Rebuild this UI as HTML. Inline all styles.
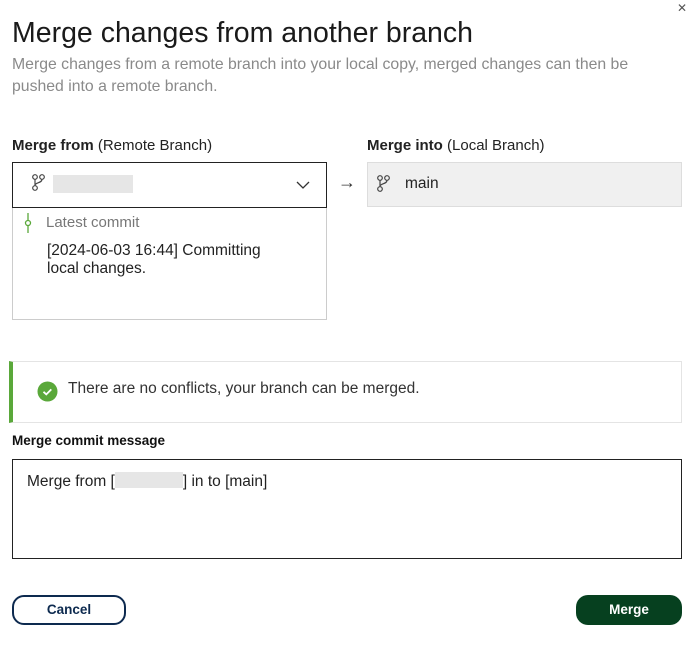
<!DOCTYPE html>
<html><head><meta charset="utf-8"><style>
*{box-sizing:border-box;margin:0;padding:0}
body{width:696px;height:650px;background:#fff;font-family:"Liberation Sans",sans-serif;color:#222;position:relative;overflow:hidden}
.a{position:absolute}
h1{position:absolute;left:12px;top:17px;font-size:28.5px;font-weight:400;color:#1a1a1a}
.sub{left:12px;top:54px;width:690px;font-size:15.8px;color:#8a8a8a;line-height:22px;white-space:nowrap}
.lbl{font-size:15px;color:#222}
.lbl b{font-weight:700}
.box{border:1px solid #ccc}
</style></head><body>
<div class="a" style="left:677px;top:1px;font-size:12px;color:#555">✕</div>
<h1>Merge changes from another branch</h1>
<div class="a sub">Merge changes from a remote branch into your local copy, merged changes can then be<br>pushed into a remote branch.</div>

<div class="a lbl" style="left:12px;top:137px"><b>Merge from</b> (Remote Branch)</div>
<div class="a lbl" style="left:367px;top:137px"><b>Merge into</b> (Local Branch)</div>

<div class="a box" style="left:12px;top:207px;width:315px;height:113px;border-top:none"></div>
<div class="a" style="left:12px;top:162px;width:315px;height:46px;border:1px solid #222;background:#fff"></div>
<svg class="a" style="left:31px;top:173px" width="16" height="20" viewBox="0 0 16 20" fill="none" stroke="#444" stroke-width="1.2"><circle cx="4" cy="4" r="2.3"/><circle cx="11" cy="4" r="2.3"/><circle cx="4" cy="15" r="2.3"/><path d="M4 6.3v6.4M11 6.3c0 4-7 3-7 6"/></svg>
<div class="a" style="left:53px;top:175px;width:80px;height:18px;background:#e6e6e6"></div>
<svg class="a" style="left:296px;top:180px" width="14" height="10"><path d="M1 2l6 6 6-6" fill="none" stroke="#333" stroke-width="1.3"/></svg>

<svg class="a" style="left:24px;top:213px" width="8" height="20"><path d="M4 0v20" stroke="#5aa83a" stroke-width="1.3"/><circle cx="4" cy="10" r="2.5" fill="#fff" stroke="#5aa83a" stroke-width="1.3"/></svg>
<div class="a" style="left:46px;top:214px;font-size:15px;color:#777">Latest commit</div>
<div class="a" style="left:47px;top:242px;font-size:15.5px;color:#222;line-height:18px;width:228px">[2024-06-03 16:44] Committing local changes.</div>

<div class="a" style="left:338px;top:172px;font-size:18px;color:#333">→</div>
<div class="a" style="left:367px;top:162px;width:315px;height:45px;background:#f0f0f0;border:1px solid #ddd"></div>
<svg class="a" style="left:376px;top:174px" width="16" height="20" viewBox="0 0 16 20" fill="none" stroke="#444" stroke-width="1.2"><circle cx="4" cy="4" r="2.3"/><circle cx="11" cy="4" r="2.3"/><circle cx="4" cy="15" r="2.3"/><path d="M4 6.3v6.4M11 6.3c0 4-7 3-7 6"/></svg>
<div class="a" style="left:405px;top:175px;font-size:15.5px;color:#222">main</div>

<div class="a" style="left:9px;top:361px;width:673px;height:62px;border:1px solid #e4e4e4;border-left:4px solid #5aa83a"></div>
<svg class="a" style="left:37px;top:381px" width="21" height="21"><circle cx="10.5" cy="10.5" r="10" fill="#5aa83a"/><path d="M6.5 10.8l2.8 2.6 5-5" fill="none" stroke="#fff" stroke-width="1.8"/></svg>
<div class="a" style="left:68px;top:380px;font-size:15.5px;color:#333">There are no conflicts, your branch can be merged.</div>

<div class="a" style="left:12px;top:433px;font-size:13.5px;font-weight:700;color:#111">Merge commit message</div>
<div class="a" style="left:12px;top:459px;width:670px;height:100px;border:1px solid #222"></div>
<div class="a" style="left:27px;top:472px;font-size:15.5px;color:#222">Merge from [<span style="display:inline-block;width:68px;height:16px;background:#e6e6e6;vertical-align:-2px"></span>] in to [main]</div>

<div class="a" style="left:12px;top:595px;width:114px;height:30px;border:2px solid #0d2a4f;border-radius:12px;text-align:center;line-height:26px;font-size:13.5px;font-weight:700;color:#0d2a4f">Cancel</div>
<div class="a" style="left:576px;top:595px;width:106px;height:30px;background:#06401f;border-radius:12px;text-align:center;line-height:30px;font-size:13.5px;font-weight:700;color:#fff">Merge</div>
</body></html>
